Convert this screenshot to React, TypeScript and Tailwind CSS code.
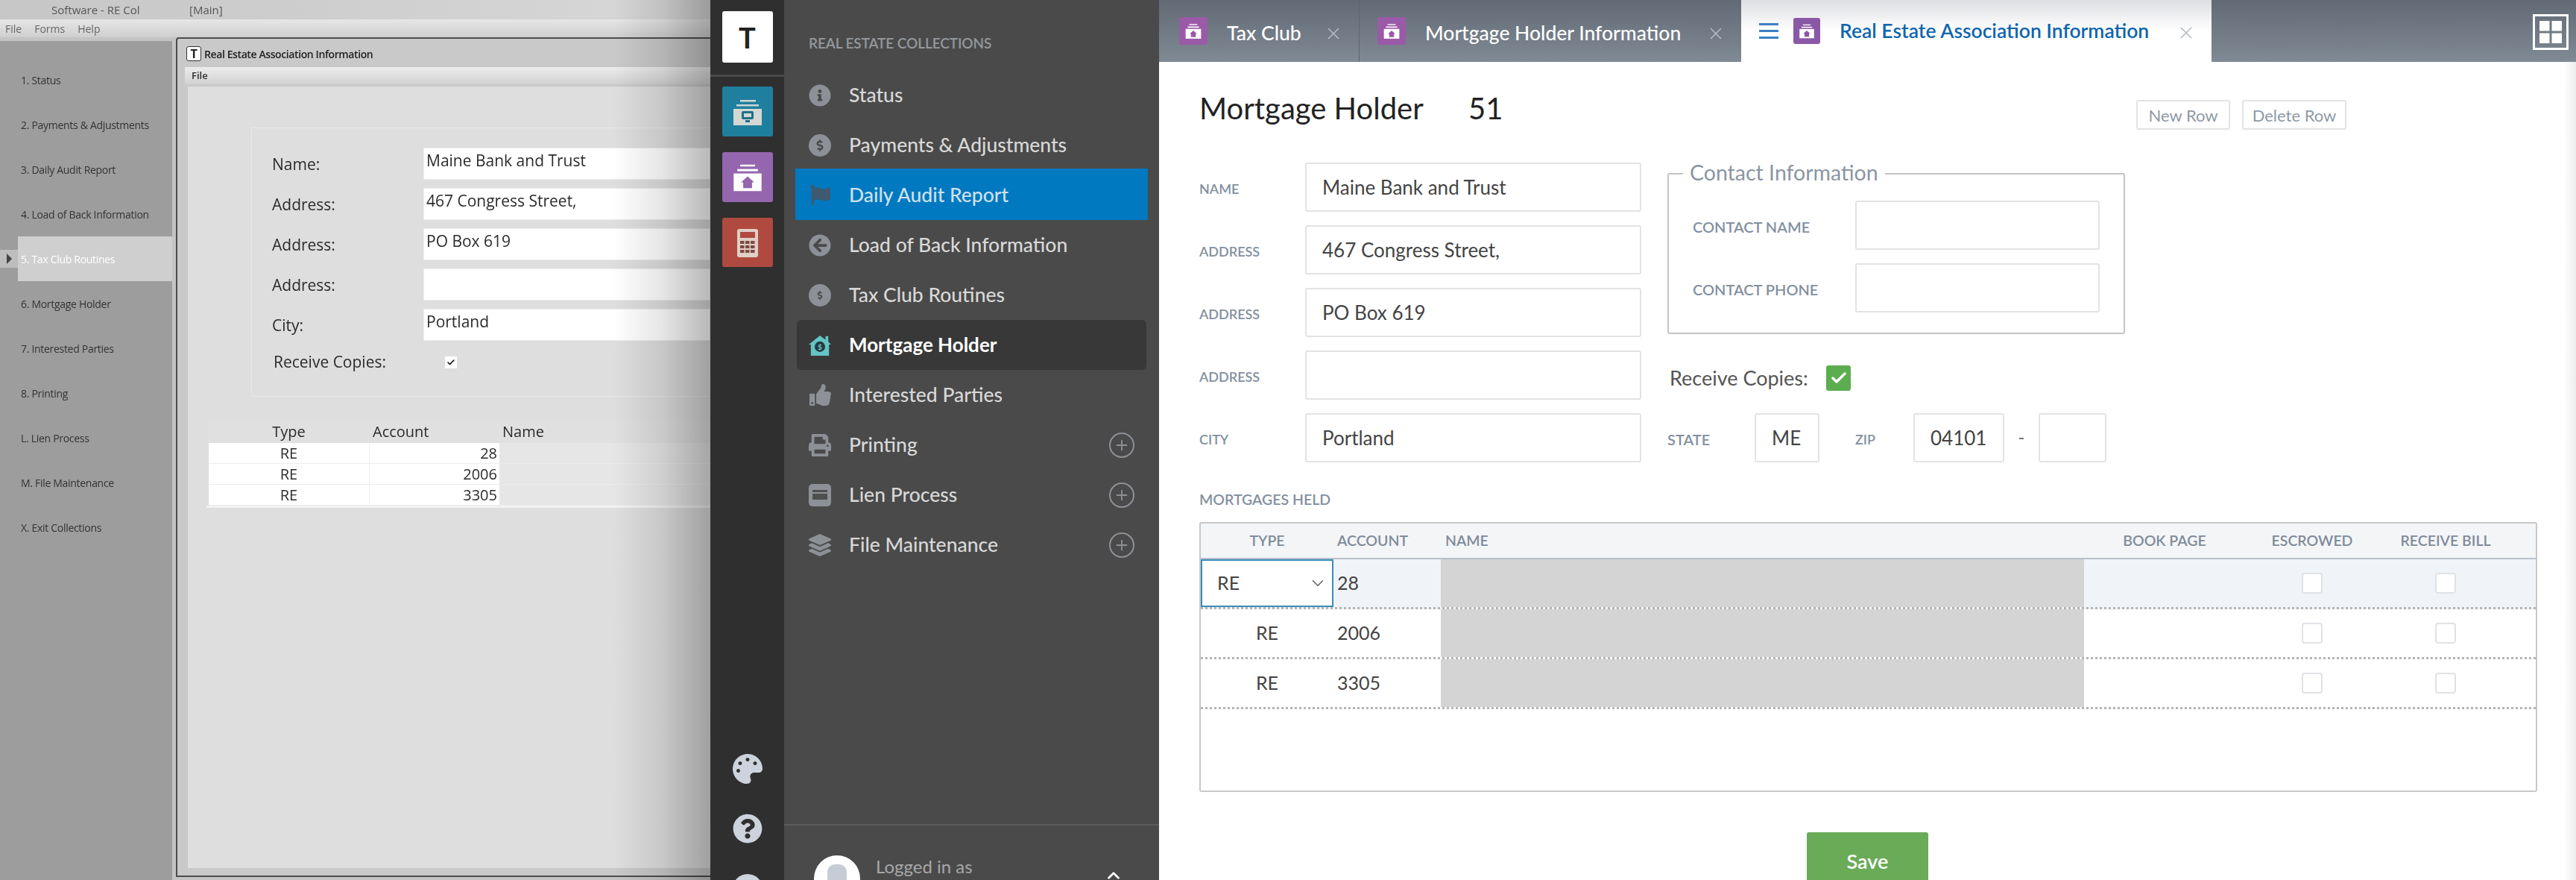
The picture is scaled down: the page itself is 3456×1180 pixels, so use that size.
import { ChevronDown, ChevronUp, Check, Plus, X } from 'lucide-react';
import {
  FaArrowCircleLeft,
  FaFlag,
  FaInfoCircle,
  FaLayerGroup,
  FaPalette,
  FaPrint,
  FaQuestionCircle,
  FaThumbsUp,
  FaDollarSign,
} from 'react-icons/fa';

const legacyMenu = [
  '1. Status',
  '2. Payments & Adjustments',
  '3. Daily Audit Report',
  '4. Load of Back Information',
  '5. Tax Club Routines',
  '6. Mortgage Holder',
  '7. Interested Parties',
  '8. Printing',
  'L. Lien Process',
  'M. File Maintenance',
  'X. Exit Collections',
];

const legacyFields = [
  { label: 'Name:', value: 'Maine Bank and Trust' },
  { label: 'Address:', value: '467 Congress Street,' },
  { label: 'Address:', value: 'PO Box 619' },
  { label: 'Address:', value: '' },
  { label: 'City:', value: 'Portland' },
];

const mortgages = [
  { type: 'RE', account: '28' },
  { type: 'RE', account: '2006' },
  { type: 'RE', account: '3305' },
];

function DollarCircle({ small }: { small?: boolean }) {
  return (
    <div className="flex h-[30px] w-[30px] items-center justify-center rounded-full bg-[#8d9197]">
      <FaDollarSign className={small ? 'h-[12px] w-[12px] text-[#4a4a4a]' : 'h-[16px] w-[16px] text-[#4a4a4a]'} />
    </div>
  );
}

function LienIcon() {
  return (
    <svg viewBox="0 0 30 30" className="h-[30px] w-[30px]">
      <rect x="0" y="0" width="30" height="30" rx="5" fill="#8d9197" />
      <rect x="5" y="8" width="20" height="13" fill="#4f4f4f" />
      <rect x="5" y="11" width="20" height="2" fill="#8d9197" />
    </svg>
  );
}

function HouseIcon() {
  return (
    <svg viewBox="0 0 32 32" className="h-[32px] w-[32px]">
      <path d="M16 2 L24 8 V3 H28 V11 L32 15 H29 V31 H3 V15 H0 Z" fill="#63c4c4" />
      <circle cx="16" cy="18" r="7.5" fill="#26393d" />
      <text x="16" y="22" textAnchor="middle" fontSize="11" fontWeight="700" fill="#63c4c4">$</text>
    </svg>
  );
}

const navItems = [
  { label: 'Status', icon: <FaInfoCircle className="h-[30px] w-[30px] text-[#8d9197]" /> },
  { label: 'Payments & Adjustments', icon: <DollarCircle /> },
  { label: 'Daily Audit Report', icon: <FaFlag className="h-[27px] w-[27px] text-[#3d5a70]" />, selected: true },
  { label: 'Load of Back Information', icon: <FaArrowCircleLeft className="h-[30px] w-[30px] text-[#8d9197]" /> },
  { label: 'Tax Club Routines', icon: <DollarCircle small /> },
  { label: 'Mortgage Holder', icon: <HouseIcon />, current: true },
  { label: 'Interested Parties', icon: <FaThumbsUp className="h-[29px] w-[29px] text-[#8d9197]" /> },
  { label: 'Printing', icon: <FaPrint className="h-[30px] w-[30px] text-[#8d9197]" />, more: true },
  { label: 'Lien Process', icon: <LienIcon />, more: true },
  { label: 'File Maintenance', icon: <FaLayerGroup className="h-[30px] w-[30px] text-[#8d9197]" />, more: true },
];

function ArchiveTile({ size, bg, box, roof }: { size: string; bg: string; box: string; roof: string }) {
  return (
    <div className={`flex shrink-0 items-center justify-center rounded-[3px] ${size} ${bg}`}>
      <svg viewBox="0 0 68 68" className="h-full w-full">
        <rect x="24" y="17" width="20" height="2.5" fill={box} />
        <rect x="20" y="23" width="28" height="3" fill={box} />
        <rect x="15" y="29" width="38" height="24" fill={box} />
        <path d="M34 33 L43 41 H40 V49 H28 V41 H25 Z" fill={roof} />
      </svg>
    </div>
  );
}

function MonitorTile() {
  return (
    <div className="h-[67px] w-[68px] shrink-0 rounded-[3px] bg-[#1f7f9e]">
      <svg viewBox="0 0 68 67" className="h-full w-full">
        <rect x="24" y="18" width="21" height="2.5" fill="#cfd6d6" />
        <rect x="19" y="24" width="30" height="2.5" fill="#cfd6d6" />
        <rect x="15" y="30" width="38" height="22" fill="#d4d8d4" />
        <rect x="26" y="33" width="16" height="11" rx="2" fill="#1d6f87" />
        <rect x="29" y="36" width="10" height="5" fill="#d4d8d4" />
        <rect x="31" y="45" width="6" height="3" fill="#1d6f87" />
      </svg>
    </div>
  );
}

function CalculatorTile() {
  return (
    <div className="h-[66px] w-[68px] shrink-0 rounded-[3px] bg-[#b04a40]">
      <svg viewBox="0 0 68 66" className="h-full w-full">
        <rect x="20" y="15" width="28" height="38" rx="3" fill="#e0cfc6" />
        <rect x="24" y="19" width="20" height="8" fill="#b04a40" />
        {[31, 37, 43].map((y) =>
          [24, 31, 38].map((x) => <rect key={`${x}-${y}`} x={x} y={y} width="5.5" height="4" fill="#7d4a44" />),
        )}
      </svg>
    </div>
  );
}

function LegacyPanel() {
  return (
    <div className="relative h-[1180px] w-[953px] shrink-0 overflow-hidden bg-[#c4c4c4] font-['Open_Sans',sans-serif] text-[#2b2b2b] blur-[0.5px]">
      <div className="flex h-[26px] items-center bg-gradient-to-r from-[#c6c6c6] to-[#d8d8d8] pl-[69px] text-[15px] text-[#555]">
        <span className="w-[185px]">Software - RE Col</span>
        <span>[Main]</span>
      </div>
      <div className="flex h-[24px] items-center gap-[17px] bg-gradient-to-b from-[#e6e6e6] to-[#cfcfcf] pl-[7px] text-[14px] text-[#666]">
        <span>File</span>
        <span>Forms</span>
        <span>Help</span>
      </div>

      <div className="flex">
        <div className="mt-[5px] h-[1125px] w-[231px] shrink-0 bg-[#9d9d9d] pt-[22px]">
          {legacyMenu.map((item) =>
            item.startsWith('5.') ? (
              <div key={item} className="flex h-[60px] items-center">
                <div className="flex h-[24px] w-[24px] items-center justify-center bg-[#bdbdbd]">
                  <div className="h-0 w-0 border-y-[7px] border-l-[7px] border-y-transparent border-l-[#444]" />
                </div>
                <div className="flex h-[60px] flex-1 items-center bg-[#cfcfcf] pl-[4px] text-[14px] tracking-[-0.3px] text-white">
                  {item}
                </div>
              </div>
            ) : (
              <div key={item} className="flex h-[60px] items-center pl-[28px] text-[14px] tracking-[-0.3px] text-[#333]">
                {item}
              </div>
            ),
          )}
        </div>

        <div className="ml-[5px] h-[1126px] w-[717px] rounded-tl-[4px] border-t-2 border-b-2 border-l-2 border-[#4d4d4d] bg-[#c9c9c9]">
          <div className="flex h-[38px] items-center gap-[4px] pl-[12px] pt-[2px] text-[14px] font-semibold tracking-[-0.4px] text-[#222]">
            <div className="flex h-[20px] w-[20px] items-center justify-center rounded-[3px] border border-[#333] bg-white text-[16px] font-bold leading-none">
              T
            </div>
            <span>Real Estate Association Information</span>
          </div>
          <div className="ml-[10px] flex h-[23px] items-center bg-gradient-to-b from-[#ececec] to-[#d2d2d2] pl-[9px] text-[13px] font-semibold">
            File
          </div>
          <div className="ml-[14px] mt-[3px] h-[1048px] bg-[#dedede] pl-[25px] pt-[55px]">
            <div className="ml-[60px] h-[361px] border-t border-l border-b border-[#e8e8e8] pt-[26px]">
              <div className="flex flex-col gap-[11px]">
                {legacyFields.map((field, i) => (
                  <div key={i} className="flex h-[43px] items-center pl-[27px] text-[21px]">
                    <div className="w-[203px] pt-[3px]">{field.label}</div>
                    <div className="flex h-[43px] flex-1 border border-[#ececec] bg-white pl-[3px] leading-[32px]">
                      {field.value}
                    </div>
                  </div>
                ))}
              </div>
              <div className="mt-[12px] flex h-[34px] items-center pl-[29px] text-[21px]">
                <div className="w-[230px]">Receive Copies:</div>
                <div className="flex h-[16px] w-[16px] items-center justify-center bg-white">
                  <Check className="h-[12px] w-[12px] text-black" strokeWidth={3} />
                </div>
              </div>
            </div>

            <div className="mt-[31px] border-b-[3px] border-[#f2f2f2] pl-[3px] text-[20px]">
              <div className="flex h-[31px] items-center bg-[#e0e0e0]">
                <div className="w-[215px] text-center">Type</div>
                <div className="w-[175px] pl-[5px]">Account</div>
                <div className="pl-[4px]">Name</div>
              </div>
              {mortgages.map((row) => (
                <div key={row.account} className="flex h-[28px] items-center border-b border-[#ececec] leading-none">
                  <div className="flex h-full w-[215px] items-center justify-center bg-white">{row.type}</div>
                  <div className="flex h-full w-[175px] items-center justify-end border-l border-[#f0f0f0] bg-white pr-[3px]">
                    {row.account}
                  </div>
                  <div className="h-full flex-1 bg-[#e6e6e6]" />
                </div>
              ))}
            </div>
          </div>
        </div>
      </div>

      {/* shadow cast by the new app sitting on top */}
      <div className="pointer-events-none absolute bottom-0 right-0 top-0 w-[130px] bg-gradient-to-r from-transparent via-black/10 to-black/28" />
    </div>
  );
}

function Rail() {
  return (
    <div className="flex h-[1180px] w-[99px] shrink-0 flex-col items-center overflow-hidden bg-[#2f2f2f] pt-[15px]">
      <div className="flex h-[69px] w-[68px] shrink-0 items-center justify-center rounded-[3px] bg-white font-['Lato',sans-serif] text-[38px] font-bold leading-none text-[#222]">
        T
      </div>
      <div className="mt-[16px] h-[3px] w-full shrink-0 bg-[#4a4a4a]" />
      <div className="mt-[13px] flex shrink-0 flex-col gap-[21px]">
        <MonitorTile />
        <ArchiveTile size="h-[67px] w-[68px]" bg="bg-[#9466ae]" box="#ffffff" roof="#9466ae" />
        <CalculatorTile />
      </div>
      <FaPalette className="mt-[653px] h-[40px] w-[42px] shrink-0 text-[#cdd3dc]" />
      <FaQuestionCircle className="mt-[40px] h-[40px] w-[40px] shrink-0 text-[#cdd3dc]" />
      <div className="mt-[41px] h-[40px] w-[40px] shrink-0 rounded-full bg-[#cdd3dc]" />
    </div>
  );
}

function Nav() {
  return (
    <div className="flex h-[1180px] w-[503px] shrink-0 flex-col bg-[#4a4a4a] font-['Lato',sans-serif]">
      <div className="mb-[24px] pl-[33px] pt-[46px] text-[19px] font-semibold leading-[24px] tracking-[-0.1px] text-[#94989c]">
        REAL ESTATE COLLECTIONS
      </div>
      <div className="flex-1">
        {navItems.map((item) => (
          <div
            key={item.label}
            className={
              item.selected
                ? 'mx-[15px] -mt-[2px] flex h-[69px] items-center bg-[#0079c1] pl-[18px] pr-[18px] pt-[2px] text-[26.5px] font-medium text-[#cfe0ee]'
                : item.current
                  ? 'mx-[17px] flex h-[67px] items-center rounded-[6px] bg-[#383838] pl-[16px] pr-[16px] text-[26px] font-bold text-white'
                  : 'mx-[15px] flex h-[67px] items-center pl-[18px] pr-[18px] text-[26.5px] font-medium text-[#d8d8d8]'
            }
          >
            <div className="flex w-[30px] justify-center">{item.icon}</div>
            <span className="ml-[24px]">{item.label}</span>
            {item.more && (
              <div className="ml-auto flex h-[34px] w-[34px] items-center justify-center rounded-full border-2 border-[#8d9197]">
                <Plus className="h-[22px] w-[22px] text-[#8d9197]" strokeWidth={2} />
              </div>
            )}
          </div>
        ))}
      </div>
      <div className="h-[75px] overflow-hidden border-t-2 border-[#5c5c5c] pl-[40px] pt-[40px]">
        <div className="flex">
          <div className="flex h-[62px] w-[62px] shrink-0 items-start justify-center rounded-full bg-white pt-[12px]">
            <div className="h-[40px] w-[26px] rounded-t-[10px] bg-[#c5ccd6]" />
          </div>
          <div className="ml-[21px] w-[132px] text-[24px] leading-[30px] text-[#a8a8a8]">
            <div>Logged in as</div>
            <div>M</div>
          </div>
          <ChevronUp className="ml-[174px] mt-[14px] h-[26px] w-[26px] text-white" strokeWidth={2.5} />
        </div>
      </div>
    </div>
  );
}

function Tabs() {
  return (
    <div className="flex h-[83px] shrink-0 bg-gradient-to-b from-[#616a75] to-[#808a94] text-[26.5px]">
      <div className="flex w-[269px] items-center border-r border-[#5e6670] pl-[27px] font-medium text-white">
        <ArchiveTile size="h-[37px] w-[38px]" bg="bg-[#9b5aa8]" box="#ffffff" roof="#9b5aa8" />
        <span className="ml-[26px] mt-[6px] w-[130px]">Tax Club</span>
        <X className="mt-[6px] h-[26px] w-[26px] text-[#b4bac1]" strokeWidth={1.5} />
      </div>
      <div className="flex w-[512px] items-center pl-[24px] font-medium text-white">
        <ArchiveTile size="h-[37px] w-[38px]" bg="bg-[#9b5aa8]" box="#ffffff" roof="#9b5aa8" />
        <span className="ml-[26px] mt-[6px] w-[377px]">Mortgage Holder Information</span>
        <X className="mt-[6px] h-[26px] w-[26px] text-[#b4bac1]" strokeWidth={1.5} />
      </div>
      <div className="flex w-[631px] items-center bg-gradient-to-b from-[#dedfe3] via-white to-white pl-[24px] font-semibold text-[#0e65ae]">
        <div className="flex w-[26px] flex-col gap-[6px]">
          <div className="h-[3px] bg-[#3b7fc4]" />
          <div className="h-[3px] bg-[#3b7fc4]" />
          <div className="h-[3px] bg-[#3b7fc4]" />
        </div>
        <div className="ml-[20px]">
          <ArchiveTile size="h-[35px] w-[36px]" bg="bg-[#8b58a6]" box="#ffffff" roof="#8b58a6" />
        </div>
        <span className="ml-[26px] w-[452px]">Real Estate Association Information</span>
        <X className="mt-[4px] h-[26px] w-[26px] text-[#b4bac1]" strokeWidth={1.5} />
      </div>
      <div className="ml-auto mr-[10px] flex items-start pt-[19px]">
        <svg viewBox="0 0 48 48" className="h-[48px] w-[48px]">
          <rect x="1.5" y="1.5" width="45" height="45" fill="none" stroke="#fff" strokeWidth="3" />
          <rect x="9" y="9" width="13.5" height="13.5" fill="#fff" />
          <rect x="25.5" y="9" width="13.5" height="13.5" fill="#fff" />
          <rect x="9" y="25.5" width="13.5" height="13.5" fill="#fff" />
          <rect x="25.5" y="25.5" width="13.5" height="13.5" fill="#fff" />
        </svg>
      </div>
    </div>
  );
}

function FieldLabel({ children, width, size = 'text-[18px]' }: { children: React.ReactNode; width: string; size?: string }) {
  return <div className={`${width} ${size} shrink-0 pt-[3px] font-semibold leading-none text-[#8390a0]`}>{children}</div>;
}

function TextBox({ value, width, pad = 'pl-[21px]' }: { value?: string; width: string; pad?: string }) {
  return (
    <div className={`flex h-[66px] shrink-0 items-center rounded-[3px] border-2 border-[#e2e3e5] bg-white text-[26px] text-[#444] ${width} ${pad}`}>
      {value}
    </div>
  );
}

function Main() {
  return (
    <div className="relative flex h-[1180px] w-[1901px] shrink-0 flex-col overflow-hidden bg-white font-['Lato',sans-serif]">
      <Tabs />
      <div className="pl-[54px]">
        <div className="mt-[51px] flex h-[40px] w-[1539px] items-center justify-between">
          <div className="-mt-[18px] flex items-center text-[40px] leading-none text-[#222]">
            <span className="w-[361px]">Mortgage Holder</span>
            <span>51</span>
          </div>
          <div className="flex gap-[16px] text-[22px] text-[#8f99a5]">
            <div className="flex h-[40px] w-[126px] items-center justify-center rounded-[3px] border-2 border-[#e2e3e5]">New Row</div>
            <div className="flex h-[40px] w-[140px] items-center justify-center rounded-[3px] border-2 border-[#e2e3e5]">Delete Row</div>
          </div>
        </div>

        <div className="mt-[44px] flex">
          <div className="flex flex-col gap-[18px]">
            {[
              ['NAME', 'Maine Bank and Trust'],
              ['ADDRESS', '467 Congress Street,'],
              ['ADDRESS', 'PO Box 619'],
              ['ADDRESS', ''],
              ['CITY', 'Portland'],
            ].map(([label, value], i) => (
              <div key={i} className="flex items-center">
                <FieldLabel width="w-[142px]">{label}</FieldLabel>
                <TextBox value={value} width="w-[451px]" />
              </div>
            ))}
          </div>

          <div className="ml-[35px]">
            <fieldset className="-mt-[1px] h-[231px] w-[614px] rounded-[3px] border-2 border-[#c4c4c4] pl-[32px]">
              <legend className="-ml-[13px] px-[9px] pb-[3px] text-[28.5px] leading-[29px] text-[#8a95a3]">Contact Information</legend>
              <div className="mt-[20px] flex flex-col gap-[18px]">
                <div className="flex items-center">
                  <FieldLabel width="w-[218px]" size="text-[20px]">CONTACT NAME</FieldLabel>
                  <TextBox width="w-[328px]" />
                </div>
                <div className="flex items-center">
                  <FieldLabel width="w-[218px]" size="text-[20px]">CONTACT PHONE</FieldLabel>
                  <TextBox width="w-[328px]" />
                </div>
              </div>
            </fieldset>
            <div className="mt-[42px] flex h-[34px] items-center pl-[3px] text-[27px] text-[#555]">
              <span className="w-[210px]">Receive Copies:</span>
              <div className="flex h-[34px] w-[33px] items-center justify-center rounded-[3px] bg-[#5cad4f]">
                <Check className="h-[24px] w-[24px] text-white" strokeWidth={3.5} />
              </div>
            </div>
            <div className="mt-[30px] flex items-center">
              <FieldLabel width="w-[117px]" size="text-[20px]">STATE</FieldLabel>
              <TextBox value="ME" width="w-[87px]" />
              <div className="ml-[48px]">
                <FieldLabel width="w-[78px]">ZIP</FieldLabel>
              </div>
              <TextBox value="04101" width="w-[122px]" />
              <span className="w-[46px] text-center text-[25px] text-[#777]">-</span>
              <TextBox width="w-[91px]" />
            </div>
          </div>
        </div>

        <div className="mt-[41px] text-[19.5px] font-semibold leading-[18px] text-[#8390a0]">MORTGAGES HELD</div>

        <div className="mt-[21px] h-[362px] w-[1795px] rounded-[3px] border-2 border-[#c8c8c8]">
          <div className="flex h-[48px] items-center border-b-2 border-[#b7c0cb] bg-[#f3f5f7] text-[19.5px] font-semibold text-[#7f8b9a]">
            <div className="w-[178px] text-center">TYPE</div>
            <div className="w-[144px] pl-[5px]">ACCOUNT</div>
            <div className="w-[863px] pl-[6px]">NAME</div>
            <div className="w-[216px] text-center">BOOK PAGE</div>
            <div className="w-[180px] text-center">ESCROWED</div>
            <div className="w-[178px] text-center">RECEIVE BILL</div>
          </div>
          {mortgages.map((row, i) => (
            <div
              key={row.account}
              className={`flex h-[67px] border-b-[3px] border-dotted border-[#b5b5b5] text-[25px] text-[#444] ${i === 0 ? 'bg-[#f0f4f8]' : 'bg-white'}`}
            >
              {i === 0 ? (
                <div className="flex w-[178px] items-center justify-between border-2 border-[#3a8db8] bg-white pl-[20px] pr-[6px]">
                  <span>{row.type}</span>
                  <ChevronDown className="h-[26px] w-[26px] text-[#666]" strokeWidth={1.5} />
                </div>
              ) : (
                <div className="flex w-[178px] items-center justify-center">{row.type}</div>
              )}
              <div className="flex w-[144px] items-center pl-[5px]">{row.account}</div>
              <div className="w-[863px] bg-[#d4d4d4]" />
              <div className="w-[216px]" />
              <div className="flex w-[180px] items-center justify-center">
                <div className="h-[28px] w-[28px] rounded-[4px] border-2 border-[#e0e2e5] bg-white" />
              </div>
              <div className="flex w-[178px] items-center justify-center">
                <div className="h-[28px] w-[28px] rounded-[4px] border-2 border-[#e0e2e5] bg-white" />
              </div>
            </div>
          ))}
        </div>

        <div className="ml-[815px] mt-[54px] flex h-[90px] w-[163px] justify-center rounded-t-[3px] bg-[#6aab58] pt-[21px] text-[27px] font-semibold leading-[36px] text-white">
          Save
        </div>
      </div>
      <div className="pointer-events-none absolute bottom-0 right-0 top-[83px] w-[16px] bg-gradient-to-r from-transparent to-[#ececec]" />
    </div>
  );
}

export default function App() {
  return (
    <div className="flex h-[1180px] w-[3456px] overflow-hidden">
      <LegacyPanel />
      <Rail />
      <Nav />
      <Main />
    </div>
  );
}
